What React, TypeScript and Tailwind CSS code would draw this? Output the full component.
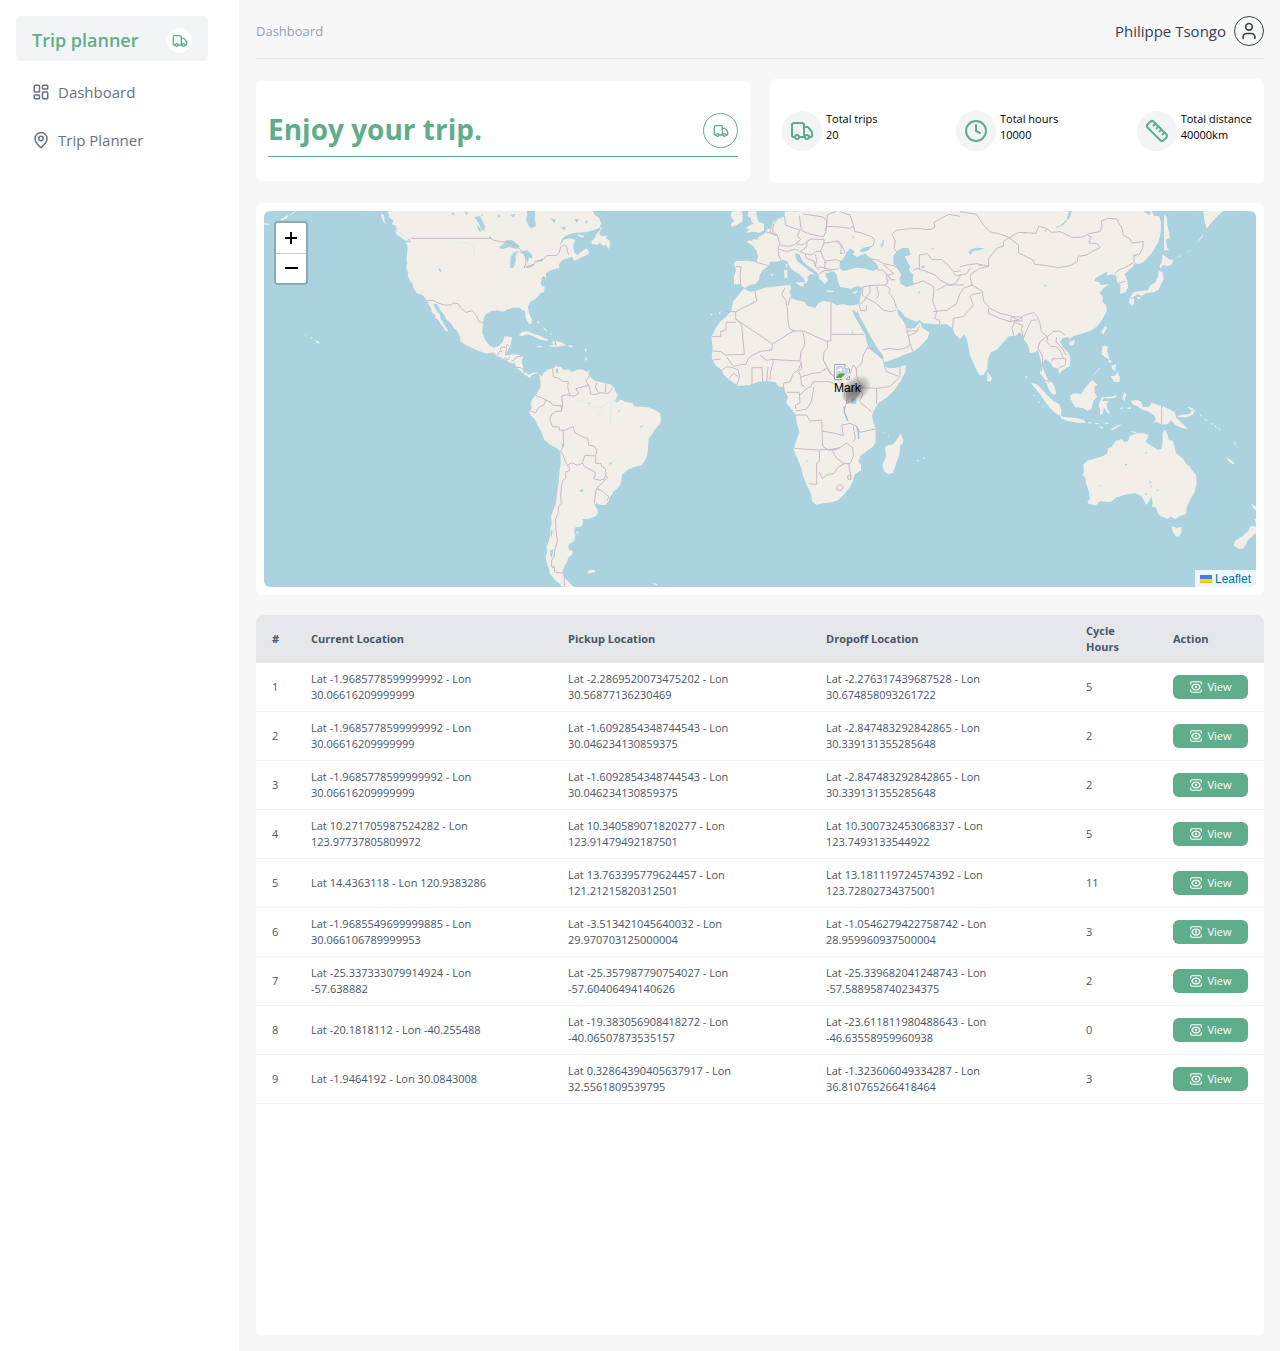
import React from "react";
import { Truck, LayoutDashboard, MapPin, User, Clock, Ruler, View } from "lucide-react";

type Trip = { from: string; pickup: string; dropoff: string; hours: number };

const trips: Trip[] = [
  { from: "Lat -1.9685778599999992 - Lon 30.06616209999999", pickup: "Lat -2.2869520073475202 - Lon 30.56877136230469", dropoff: "Lat -2.276317439687528 - Lon 30.674858093261722", hours: 5 },
  { from: "Lat -1.9685778599999992 - Lon 30.06616209999999", pickup: "Lat -1.6092854348744543 - Lon 30.046234130859375", dropoff: "Lat -2.847483292842865 - Lon 30.339131355285648", hours: 2 },
  { from: "Lat -1.9685778599999992 - Lon 30.06616209999999", pickup: "Lat -1.6092854348744543 - Lon 30.046234130859375", dropoff: "Lat -2.847483292842865 - Lon 30.339131355285648", hours: 2 },
  { from: "Lat 10.271705987524282 - Lon 123.97737805809972", pickup: "Lat 10.340589071820277 - Lon 123.91479492187501", dropoff: "Lat 10.300732453068337 - Lon 123.7493133544922", hours: 5 },
  { from: "Lat 14.4363118 - Lon 120.9383286", pickup: "Lat 13.763395779624457 - Lon 121.21215820312501", dropoff: "Lat 13.181119724574392 - Lon 123.72802734375001", hours: 11 },
  { from: "Lat -1.9685549699999885 - Lon 30.066106789999953", pickup: "Lat -3.513421045640032 - Lon 29.970703125000004", dropoff: "Lat -1.0546279422758742 - Lon 28.959960937500004", hours: 3 },
  { from: "Lat -25.337333079914924 - Lon -57.638882", pickup: "Lat -25.357987790754027 - Lon -57.60406494140626", dropoff: "Lat -25.339682041248743 - Lon -57.588958740234375", hours: 2 },
  { from: "Lat -20.1818112 - Lon -40.255488", pickup: "Lat -19.383056908418272 - Lon -40.06507873535157", dropoff: "Lat -23.611811980488643 - Lon -46.63558959960938", hours: 0 },
  { from: "Lat -1.9464192 - Lon 30.0843008", pickup: "Lat 0.32864390405637917 - Lon 32.5561809539795", dropoff: "Lat -1.323606049334287 - Lon 36.810765266418464", hours: 3 },
];

type Region = { at: string; land: string[]; water?: string[]; borders: string[]; lakes?: string[]; rivers?: string[] };

const regions: Region[] = [
  {
    // North and Central America, Caribbean
    at: "translate(264 205) scale(0.33333)",
    land: [
      "370,10 374,28 376,38 388,46 384,58 396,62 398,78 412,84 420,96 436,102 441,112 430,112 425,110 430,124 430,140 427,165 430,172 426,190 432,200 431,212 438,228 446,238 448,247 458,265 475,270 488,285 495,300 502,312 503,322 515,330 513,338 524,346 530,358 540,368 541,376 553,381 549,370 540,360 537,350 530,342 528,330 518,318 512,305 508,296 520,298 528,315 540,330 548,344 562,356 570,370 580,378 588,395 589,408 605,420 630,432 655,442 668,446 680,443 690,444 700,454 715,460 728,466 738,474 752,474 757,488 770,498 780,508 798,519 803,510 820,505 828,516 830,526 845,510 832,514 820,502 805,504 795,509 782,500 778,488 773,470 777,453 755,448 733,450 727,445 735,430 741,415 744,396 722,394 716,410 705,422 690,428 677,422 664,405 655,385 656,365 658,345 665,328 683,318 700,316 715,320 722,318 727,315 745,308 765,308 775,316 783,318 785,340 795,356 802,358 804,345 795,325 792,305 800,290 815,282 828,266 840,260 842,247 834,236 832,220 840,212 846,222 846,205 862,195 872,192 885,190 885,178 895,165 910,160 925,155 930,168 950,158 968,150 976,142 968,130 950,142 940,150 930,140 928,120 934,104 915,100 900,104 886,122 896,100 905,92 928,84 965,82 988,76 1006,68 1012,56 1005,38 992,30 984,10",
      "1008,64 1010,74 996,88 994,98 983,108 983,117 1000,119 1008,114 1018,122 1026,120 1034,132 1038,122 1036,106 1026,100 1028,92 1014,94 1005,86 1014,70",
      "765,390 775,380 790,379 812,388 830,393 842,400 856,405 846,408 828,404 808,394 790,388 772,394",
      "862,410 880,409 896,414 905,421 890,424 872,427 852,422 870,420",
      "820,422 832,423 835,427 822,427", "914,421 927,422 924,427 914,425",
      "154,406 163,408 167,412 160,416", "139,396 148,399 144,402", "122,387 129,389 125,391",
      "940,88 960,92 956,98 944,94", "350,28 360,30 362,50 370,62 358,50", "390,76 410,84 430,100 438,110 420,104 400,90",
      "0,54 18,57 14,60 0,58", "48,44 66,34 72,30 70,38 56,46", "74,32 88,22 98,18 84,28",
      "818,346 826,352 824,358", "836,366 848,374 846,380", "858,382 866,390 860,388", "962,430 968,434 964,442", "964,452 969,462 965,470",
    ],
    water: [
      "703,128 718,118 726,106 745,106 768,124 758,132 735,126 716,132", "738,188 740,155 750,142 766,138 754,150 756,165 750,186 744,190",
      "766,140 790,136 806,152 804,160 794,158 792,172 784,158 778,148", "786,186 810,176 808,184 788,190", "814,170 838,160 836,168 816,172",
      "785,10 790,30 786,46 792,60 802,70 816,62 812,40 814,10", "630,36 648,34 656,48 664,66 660,78 652,72 646,58 640,48", "638,58 648,70 654,80 644,78",
      "522,190 530,192 533,202 526,198", "832,226 840,240 836,246 830,236", "648,30 656,28 656,34", "675,94 683,96 682,102 676,101",
      "700,30 712,32 704,38", "740,30 756,26 748,38", "860,40 876,44 870,54", "890,68 906,64 902,76", "930,44 944,40 940,54", "962,50 972,46 968,56", "600,20 612,24 608,30", "560,26 570,22 572,32", "874,480 882,488 880,502 872,494",
    ],
    borders: [
      "440,100 680,100 690,106 712,110 735,112 765,130 785,148 786,175 780,188 810,178 815,168 835,166 848,152 878,151 886,142 890,126 898,120 908,124 910,140 915,150",
      "490,286 508,286 522,294 540,300 562,300 568,294 582,296 592,310 605,322 625,317 636,330 645,350 658,353",
      "700,450 706,440 714,440 708,432 714,427 728,427 728,420 734,420", "728,430 724,450 734,448", "720,458 732,464 738,456", "742,470 752,464 758,456 775,453", "757,487 770,488 780,494 780,505", "826,500 824,515", "874,410 876,424",
    ],
    rivers: ["600,112 622,118 632,136 630,158", "578,112 590,116"],
  },
  {
    // South America
    at: "translate(500 350) scale(0.33333)",
    land: [
      "118,80 122,95 120,115 108,135 97,148 93,160 95,175 88,186 94,198 104,208 112,225 125,248 132,268 150,284 170,295 181,305 182,340 178,370 176,400 172,420 170,440 167,465 158,485 153,500 155,520 150,540 150,558 146,575 140,590 142,605 137,620 140,640 146,655 150,672 165,690 180,702 190,715 228,715 214,704 200,690 193,680 188,665 192,650 202,635 204,624 215,615 219,603 208,600 204,590 208,582 222,574 226,558 222,545 226,532 244,530 249,520 248,508 268,506 284,500 294,490 292,478 283,464 290,460 302,465 318,464 326,452 330,440 345,422 358,408 365,392 366,374 385,358 405,350 425,346 436,330 442,312 444,295 446,265 460,246 470,232 480,222 483,208 480,190 465,180 445,172 420,170 402,168 398,160 375,155 362,148 350,158 345,152 354,136 345,122 342,112 330,102 300,96 285,92 275,85 265,74 268,68 245,58 228,60 215,66 205,58 190,60 182,50 170,50 168,44 158,54 142,60 130,70 124,82",
      "262,664 272,660 286,660 284,666 272,670 264,670", "458,698 470,702 474,708 462,702", "228,544 236,546 232,552", "262,60 269,62 265,67",
    ],
    water: ["168,56 174,56 174,70 168,70", "239,420 249,417 249,426 241,425", "184,278 190,282 192,292 186,288", "418,230 430,226 428,231 420,233", "326,342 338,334 332,344", "354,180 360,182 358,187", "264,158 272,158 270,163", "337,428 349,418 344,430", "152,540 158,540 156,560 151,556", "152,600 160,598 156,625 150,615", "160,646 166,650 160,656"],
    borders: [
      "165,45 158,58 160,80 175,85 190,94 205,95 203,110 208,132 215,138 224,138 236,130 228,116 250,110 265,107 258,92 268,78",
      "265,104 270,118 272,132 285,134 300,128 325,130 338,112", "295,128 286,112 290,98", "316,128 318,98",
      "212,138 200,134 185,138 188,165 184,184 168,184 155,192 149,210 158,230 178,232 178,240 195,241 205,236 220,230 224,248 244,258 264,266 266,286 282,288 290,300 287,318 255,316 247,338",
      "108,137 122,142 138,150 132,164 116,172 106,188 92,184", "138,150 150,156 160,166 184,167 184,180", "190,241 190,268 192,285 182,305 190,318 196,335 202,347 215,338 232,346 247,340 255,350 285,366 286,376 280,386 300,391 314,386 318,370 316,356 304,348 302,340 287,340 287,318",
      "202,347 208,352 208,362 198,365 197,385 188,392 184,410 182,440 184,458 176,470 174,490 166,510 168,540 172,575 166,592 162,620 155,632 155,650 163,654 164,666 192,670 193,711",
      "318,376 322,384 290,415 308,424 326,440 322,452", "290,415 286,432 283,460",
    ],
    rivers: ["354,150 320,160 300,172 270,168 252,156 230,150", "334,162 332,200 330,230", "310,165 304,185 290,205"],
  },
  {
    // Europe, Africa and Asia
    at: "translate(690 205) scale(0.33333)",
    land: [
      "132,174 140,167 158,168 175,167 200,172 204,155 200,138 190,124 172,112 174,106 186,108 190,102 202,104 208,94 224,86 230,74 244,68 250,50 262,42 274,38 284,34 284,10 1370,10 1384,18 1392,32 1408,34 1413,52 1412,85 1405,112 1385,145 1362,170 1345,178 1334,174 1328,186 1316,196 1304,208 1312,228 1314,248 1306,262 1290,267 1292,240 1282,232 1278,212 1264,208 1250,213 1252,200 1236,208 1216,220 1214,228 1228,232 1232,240 1256,238 1240,250 1228,264 1238,274 1238,292 1248,300 1250,318 1238,342 1220,365 1200,378 1180,385 1150,394 1138,402 1135,396 1118,400 1110,410 1120,428 1134,442 1141,460 1140,482 1120,494 1108,506 1104,492 1088,486 1082,474 1066,462 1060,470 1058,488 1066,506 1074,525 1086,532 1094,546 1099,566 1090,570 1078,556 1070,536 1058,514 1050,504 1056,480 1050,458 1044,436 1036,442 1020,444 1014,420 1002,404 998,392 988,382 978,392 956,394 944,408 920,434 902,442 893,465 892,492 882,508 870,512 858,492 840,450 830,400 822,388 810,402 795,388 788,370 770,358 735,358 700,355 688,344 682,350 664,345 645,335 632,318 620,312 625,330 636,342 644,356 650,368 664,372 678,366 690,350 696,368 718,382 714,398 700,414 686,428 668,440 640,450 620,460 582,472 578,450 560,425 544,398 530,372 518,350 508,332 503,318 508,300 512,272 517,246 500,244 482,252 466,248 450,246 444,230 438,206 430,198 418,206 406,202 408,214 414,226 404,238 396,228 388,222 384,206 366,190 350,180 336,166 328,148 318,144 315,152 324,170 342,184 356,196 374,208 360,208 352,216 354,226 346,238 342,222 328,208 312,198 300,188 292,168 276,164 262,170 240,170 234,184 218,196 208,212 208,222 198,236 180,240 164,250 152,238 132,238 132,214 138,196",
      "155,258 162,252 182,260 200,257 225,248 262,244 300,240 304,250 298,262 304,270 300,278 320,286 342,290 352,302 376,308 384,296 398,288 424,292 440,300 460,298 480,302 505,298 510,306 500,324 494,318 486,314 492,330 500,345 508,358 516,374 526,388 528,402 534,425 548,440 562,450 578,465 582,484 596,490 620,488 648,480 646,500 634,524 614,554 590,578 564,595 550,620 546,632 550,652 556,668 557,710 548,726 530,738 510,754 506,770 513,780 513,796 494,808 488,830 480,845 464,866 446,884 428,892 402,894 378,899 366,888 364,868 350,840 338,810 334,790 322,760 311,736 318,710 328,680 320,655 318,630 304,612 288,594 294,575 286,565 282,544 268,546 256,532 230,528 205,530 180,540 145,543 120,526 100,508 94,494 76,480 65,458 68,430 64,396 76,372 90,350 108,336 124,318 130,288 146,270",
      "178,10 172,34 182,38 184,50 192,56 180,60 166,70 180,72 166,84 188,80 208,84 222,76 222,56 206,50 200,34 198,10",
      "130,10 154,10 158,30 156,50 140,60 126,66 122,58 132,48 122,32", "316,232 342,231 340,246 326,240", "282,196 292,194 292,218 284,220", "286,178 292,176 290,192", "408,256 432,258 430,262 410,260",
      "240,206 250,208 246,214", "1540,18 1544,50 1550,72 1558,60 1580,35 1596,22 1600,10 1540,10",
      "1422,28 1430,36 1432,60 1440,98 1428,104 1432,130 1438,136 1422,136 1422,80", "1418,148 1436,162 1450,166 1446,176 1434,184 1420,180 1412,190 1408,184 1416,170", "1406,198 1418,200 1421,222 1412,240 1406,254 1392,262 1370,264 1356,272 1342,268 1330,276 1318,282 1330,262 1350,258 1374,256 1380,242 1396,232 1404,216", "1318,282 1332,280 1332,296 1324,302 1318,292", "1340,276 1352,276 1346,284",
      "1247,362 1250,370 1240,390 1234,380", "1138,412 1156,404 1150,420 1140,422", "1238,422 1253,424 1252,440 1258,462 1248,458 1234,448", "1262,514 1276,512 1282,500 1290,518 1288,532 1272,530", "1254,462 1266,470 1258,474", "1264,482 1278,478 1276,500 1266,490", "1208,512 1228,490 1232,488 1212,510",
      "892,500 906,518 902,530 892,528", "60,328 70,326 64,332", "86,326 92,318 90,328",
      "1452,162 1474,150 1472,154", "1486,144 1504,134 1500,138", "1518,116 1540,88 1536,98",
    ],
    water: [
      "448,190 450,172 462,158 470,140 482,130 494,140 488,148 502,156 512,150 526,146 544,162 560,176 566,190 550,198 520,190 498,188 476,194 460,198",
      "508,138 518,128 544,124 536,136 518,142", "610,152 622,138 638,128 656,130 662,150 644,154 656,178 662,184 656,196 670,208 668,226 672,240 650,246 632,236 628,222 634,210 622,190 610,176",
      "426,200 438,204 442,220 436,222 448,240 430,246 412,232 418,226 408,212 414,204",
      "340,10 330,18 310,20 300,14 290,22 286,10", "840,134 858,128 884,130 870,135 848,138 842,150 836,144", "1096,66 1110,62 1130,44 1136,18 1146,18 1140,36 1122,58 1102,68", "692,184 702,180 704,190 696,188", "724,130 732,130 730,136", "484,94 494,96 492,100", "578,105 582,106 580,125 576,120", "862,181 878,178 874,184", "998,82 1008,80 1004,86", "1060,240 1070,240 1068,246", "684,258 692,262 686,266", "590,222 598,226 592,230", "572,112 578,130 572,124", "484,386 490,372 488,386", "600,224 606,222 606,228",
      "485,580 500,582 498,598 484,596", "346,768 354,766 352,770", "1064,74 1072,72 1066,82", "1330,148 1338,150 1334,156", "1360,18 1384,20 1376,30",
    ],
    borders: [
      "195,258 200,288 178,300 160,308 137,320 137,342 247,417 310,378", "137,320 108,320", "285,248 275,268 288,288 292,310 294,348 298,370 318,380", "295,300 300,278", "423,293 423,408 412,408 412,430", "340,378 412,410", "425,388 523,388", "65,395 92,394 92,380 108,375 108,352 137,352",
      "155,360 163,448 107,450 92,440 68,438", "92,462 70,465", "155,360 137,342", "310,378 338,378", "247,417 246,434 210,440 185,452 175,460 168,478 145,480 130,484 110,456", "210,450 230,466 245,463 290,466 330,468 333,440 345,420 342,398 338,378", "240,525 242,500 250,470 244,460", "96,496 110,485 128,488 145,495 148,515 142,540", "186,540 186,488 216,488 218,530", "230,528 234,486", "118,520 130,505 145,515",
      "335,470 325,495 310,505 300,530 282,534 280,545", "412,430 402,440 400,465 412,488 392,502 364,506 335,515 330,520", "332,470 336,490 326,500 332,512 334,540 345,545", "410,488 424,510 440,510 462,506 478,512 490,480 498,490 500,512", "534,425 520,450 516,472 500,490 500,515 515,548 560,550 600,545 630,515 630,486", "534,430 555,432 578,460", "582,484 590,500 625,514",
      "560,550 560,595", "412,488 430,515 460,540", "290,562 328,562 330,594 316,600 318,612", "330,570 350,550 362,545 370,530 420,530 448,545 470,545", "282,562 292,575", "318,618 350,612 364,590 372,545", "316,630 350,630 360,648 395,645 396,678 398,724 416,736 450,728", "314,730 380,735 440,732", "396,678 440,686 460,692 455,660 480,655 500,664 510,682 555,672",
      "388,738 388,770 380,775 380,838 356,836", "388,800 396,820 415,808 430,806 445,786 462,776 480,776 490,755 488,728 470,714 450,728 424,738", "462,776 440,760 428,740", "476,776 480,800 484,815", "466,545 462,580 470,590 462,620", "510,592 545,620", "512,550 518,570 508,590", "490,664 496,700 490,710", "440,846 450,838 460,846 454,856 442,856 440,846", "473,812 482,812 483,824 474,822 473,812",
      "138,184 154,186 150,210 152,238", "198,172 236,182", "244,68 240,80 262,92 270,118 264,128 266,150 272,164", "226,80 240,84 258,92", "262,42 250,60 248,78 262,92", "284,34 286,60 330,76 322,92 332,104 314,118 300,124 272,122", "266,132 290,140 318,132 328,140", "318,116 340,120 352,108 364,102 402,104", "328,32 334,76 355,86 400,96 408,80 410,50 400,36 360,30 340,28", "352,108 350,125 330,140 346,146 364,150 376,140 392,138 402,114 402,104", "346,146 348,160 372,168 376,184 388,195", "376,148 380,164 376,186", "392,138 400,160 406,168 440,164 454,170", "402,114 420,112 440,108 454,124 452,146 464,144", "406,168 404,190 430,195 446,190", "440,108 450,112 466,142", "384,186 404,188", "388,206 404,196 426,198",
      "404,78 410,64 450,66 480,70 490,62 495,80 515,84 545,95 553,104 550,120 540,128", "410,60 412,30 440,18", "450,20 480,30 490,60", "540,162 560,164 580,176 612,182 620,190", "560,194 580,196 590,210 592,235 584,240 540,242 518,246", "582,180 600,196 612,206 596,210", "592,206 600,222 615,225", "540,242 540,262 520,290 510,298", "520,245 516,270 524,276 560,296 580,316 604,320 618,315", "560,245 566,268 560,280", "584,240 602,252 596,262 612,284 620,310", "508,300 512,316 528,318 530,300", "578,434 600,430 624,434 650,428 660,416 655,392 680,382 685,370 688,362", "655,392 650,378 680,378", "660,416 668,438", "650,366 652,380",
      "620,140 612,130 616,108 606,90 618,76 650,72 680,70 720,74 735,66 732,52 776,28 810,34", "810,20 860,28 880,60 900,80 940,90 958,98 985,82 1025,84 1038,85 1046,64 1070,70 1084,82 1110,80 1150,98 1178,96 1200,85 1230,80 1236,62 1234,48 1252,40 1280,42 1296,70 1300,90 1320,102 1326,114 1360,110 1358,130 1348,148 1332,152 1332,172 1304,188 1288,194 1272,208",
      "958,98 985,120 986,144 1028,164 1034,178 1070,182 1105,188 1140,182 1162,170 1164,154 1190,150 1206,140 1230,128 1222,116 1196,114 1204,96 1194,90", "958,98 940,110 942,122 920,130 910,142 896,160 896,184 870,190 845,205 840,215 846,240 876,258 882,290 900,310 930,325 960,332 985,345 1000,332 1030,322 1042,335 1050,355 1054,380 1072,395 1090,380 1110,378 1125,390",
      "670,196 680,190 705,198 735,210 750,225 780,240 796,236 812,210", "688,194 688,150 712,146 726,164 755,164 778,184 790,200 812,198", "810,185 830,180 860,176 896,184", "790,204 800,212 830,206 840,190", "668,238 700,228 730,244 732,256 728,290 740,320 734,340 750,348 748,358", "730,320 770,316 800,296 808,270 820,250 848,240", "740,256 770,240 796,240 822,240", "788,370 790,340 820,335 838,315 850,300 840,275 848,268 872,264", "896,310 895,325 930,340 960,350 984,346", "960,350 965,335 995,336 996,348 970,348", "972,356 966,370 972,394", "970,352 998,360 994,372 1000,400 1010,376 1024,346 1040,345", "1070,395 1050,410 1044,430 1056,450 1058,470 1054,500", "1074,392 1070,410 1082,424 1100,425 1112,440 1120,460 1128,462 1126,480 1105,490", "1100,396 1098,410 1118,432 1128,450", "1086,470 1086,462 1120,460", "1286,234 1305,230", "1062,524 1080,532",
      "1140,574 1160,574 1172,568 1188,574 1196,564 1194,550 1210,545", "1180,545 1200,540 1220,550",
    ],
    lakes: ["462,604 464,625 474,648", "500,664 505,680 506,702", "514,540 518,552"],
  },
  {
    // Cyprus
    at: "translate(690 205) scale(0.33333)",
    land: ["486,264 494,259 504,257 496,266"],
    borders: [],
  },
  {
    // Madagascar, Indian Ocean islands
    at: "translate(760 360) scale(0.33333)",
    land: ["422,220 430,240 428,250 420,258 418,285 408,312 400,338 385,343 372,334 368,312 378,292 375,262 384,256 400,252 412,236", "470,300 477,301 474,305", "488,292 495,293 491,297", "368,216 373,218 369,220", "384,224 388,226 384,228"],
    borders: [],
  },
  {
    // Indonesia and Oceania
    at: "translate(1000 370) scale(0.33333)",
    land: [
      "93,38 110,42 122,54 140,74 160,92 176,102 184,116 183,138 166,130 148,112 134,94 120,72 104,54", "181,138 200,142 228,144 252,150 258,158 232,158 202,152 184,146", "264,156 276,158 268,161", "282,158 300,160 290,163", "306,158 328,158 322,162", "296,168 310,172 306,176", "332,178 348,168 364,162 356,170 338,180",
      "210,76 222,70 244,72 258,50 276,30 284,36 292,44 284,50 284,68 292,80 280,92 274,118 262,122 248,114 226,112 218,100 212,86", "298,98 306,82 328,80 346,78 350,72 348,82 330,86 312,84 306,94 328,92 320,102 322,116 330,130 322,130 312,112 308,132 300,134 300,114 296,110", "368,78 374,66 378,74 374,94 370,90", "358,114 370,112 366,118", "376,114 394,112 392,118",
      "392,92 412,90 424,96 428,110 446,112 456,98 472,104 486,108 508,118 524,126 530,144 546,160 564,176 544,174 526,164 512,150 504,162 486,164 472,156 458,158 468,150 462,136 444,124 428,120 412,108 400,104", "532,138 548,134 568,132 574,124 584,122 578,134 560,142 536,142", "560,110 576,114 586,124 574,120", "598,130 606,136 602,138", "612,144 626,154 618,152", "630,158 640,162 636,164", "642,162 654,176 646,172", "654,168 662,180 658,180", "702,212 707,220 705,228", "709,222 714,236 711,234", "678,262 690,268 706,282 698,282 684,272",
      "250,284 262,272 290,264 310,258 322,250 324,234 334,232 348,212 366,208 372,216 384,214 390,198 412,190 430,190 446,195 442,208 436,214 455,228 475,240 484,236 488,210 488,190 494,179 502,192 506,210 518,212 524,232 528,250 550,266 556,280 570,290 578,304 588,314 590,340 584,366 570,390 560,412 558,432 540,438 526,447 512,440 502,446 480,438 472,428 468,412 456,410 458,398 454,378 448,394 438,405 432,392 424,378 405,370 380,373 350,382 332,396 300,394 288,406 266,402 262,394 270,388 266,362 258,340 256,322 246,316 252,306",
      "390,184 412,186 404,189", "514,468 530,474 545,470 545,486 536,500 526,498 518,484", "508,456 512,462 508,462", "770,470 752,468 744,484 728,498 704,514 702,528 716,536 728,536 738,524 742,512 758,498 770,486", "752,400 768,410 770,422 762,416", "764,446 770,450 766,458", "76,16 82,22 78,26", "98,72 104,76 100,78", "114,92 120,98 116,100", "126,106 132,112 128,114",
    ],
    water: ["374,282 383,282 380,287 376,286", "434,247 441,247 438,251", "446,334 456,336 450,340", "450,346 458,348 452,352", "470,358 476,360 472,363", "432,370 442,372 438,376", "296,346 302,348 298,351"],
    borders: ["485,108 485,164"],
  },
];

function WorldMap() {
  return (
    <svg className="block h-full w-full" viewBox="264 211 992 376" preserveAspectRatio="xMidYMid slice" role="img" aria-label="World map">
      <defs>
        <radialGradient id="shade">
          <stop offset="0" stopColor="#333" stopOpacity="0.5" />
          <stop offset="0.5" stopColor="#333" stopOpacity="0.34" />
          <stop offset="1" stopColor="#333" stopOpacity="0" />
        </radialGradient>
      </defs>
      <rect x="0" y="0" width="1600" height="800" fill="#aad3df" />
      {regions.map((r, n) => (
        <g key={n} transform={r.at}>
          {r.land.map((p, i) => (
            <polygon key={i} points={p} fill="#f2efe9" />
          ))}
          {r.water?.map((p, i) => (
            <polygon key={i} points={p} fill="#aad3df" />
          ))}
          {r.rivers?.map((p, i) => (
            <polyline key={i} points={p} fill="none" stroke="#dde6e5" strokeWidth="2" />
          ))}
          {r.lakes?.map((p, i) => (
            <polyline key={i} points={p} fill="none" stroke="#93bcd6" strokeWidth="4" />
          ))}
          {r.borders.map((p, i) => (
            <polyline key={i} points={p} fill="none" stroke="#c9b3c5" strokeWidth="2.8" />
          ))}
        </g>
      ))}
      <path d="M847 404 C845 399 845 392 848 387 L861 386 C862 392 857 399 851 403 Z" fill="#333" opacity="0.3" />
      <ellipse cx="856" cy="389" rx="17" ry="12" transform="rotate(-38 856 389)" fill="url(#shade)" />
    </svg>
  );
}

function BrokenImage() {
  return (
    <svg width="16" height="16" viewBox="0 0 16 16" className="block">
      <path d="M0.5 15.5V0.5H11L15.5 5V9L9 15.500Z" fill="#fff" stroke="#a3a3a3" />
      <path d="M2 2H10V6H14V9L8 14H2Z" fill="#c3d5f5" />
      <path d="M3 7C3 5 5 5 5.500 4.500C7 3 8.500 5 8 7Z" fill="#fff" />
      <path d="M2 14C3 10 8 8 11 10L7 14Z" fill="#55a832" />
      <path d="M8 16L16 8.500V11L11 16Z" fill="#f2efe9" />
      <path d="M12 15.500H15.500V12Z" fill="#fff" stroke="#a3a3a3" />
      <path d="M11 0.500V5H15.500" fill="#fff" stroke="#a3a3a3" />
    </svg>
  );
}

function Stat({ icon, label, value }: { icon: React.ReactNode; label: string; value: string }) {
  return (
    <div className="flex gap-1">
      <div className="flex size-10 items-center justify-center rounded-full bg-gray-100 text-[#5fad8a]">{icon}</div>
      <div className="text-[11px] leading-4 text-black">
        <p>{label}</p>
        <p>{value}</p>
      </div>
    </div>
  );
}

export default function App() {
  return (
    <div className="flex min-h-screen bg-[#f7f7f7] font-['Open_Sans','Noto_Sans',sans-serif]">
      <aside className="w-[239px] shrink-0 bg-white p-4">
        <div className="flex w-48 items-center justify-between rounded-md bg-gray-100 px-4 pt-3 pb-2">
          <span className="text-[18px] leading-[25px] font-semibold text-[#5fad8a]">Trip planner</span>
          <span className="flex size-[25px] items-center justify-center rounded-full bg-white text-[#5fad8a]">
            <Truck size={16} />
          </span>
        </div>
        <nav className="mt-[7px] flex flex-col text-[15px] text-gray-500">
          <a href="#dashboard" className="flex h-12 items-center gap-2 px-4">
            <LayoutDashboard size={18} />
            Dashboard
          </a>
          <a href="#planner" className="flex h-12 items-center gap-2 px-4">
            <MapPin size={18} />
            Trip Planner
          </a>
        </nav>
      </aside>

      <main className="flex min-w-0 flex-1 flex-col gap-5 py-4 pr-4 pl-[17px]">
        <header className="flex h-[43px] items-start justify-between border-b border-gray-200">
          <span className="text-[13px] leading-[30px] text-gray-400">Dashboard</span>
          <div className="flex items-center gap-2 text-gray-700">
            <span className="text-[15px]">Philippe Tsongo</span>
            <span className="flex size-[30px] items-center justify-center rounded-full border border-gray-700">
              <User size={20} />
            </span>
          </div>
        </header>

        <section className="grid grid-cols-2 items-center gap-5">
          <div className="rounded-md bg-white px-3 pt-8 pb-6">
            <div className="flex items-start justify-between border-b border-[#5fad8a] pb-2">
              <h1 className="text-[28px] leading-8 font-bold text-[#5fad8a]">Enjoy your trip.</h1>
              <span className="flex size-[35px] items-center justify-center rounded-full border border-[#5fad8a] text-[#5fad8a]">
                <Truck size={16} />
              </span>
            </div>
          </div>
          <div className="flex h-[104px] items-center justify-between rounded-md bg-white px-3">
            <Stat icon={<Truck size={24} />} label="Total trips" value="20" />
            <Stat icon={<Clock size={24} />} label="Total hours" value="10000" />
            <Stat icon={<Ruler size={24} />} label="Total distance" value="40000km" />
          </div>
        </section>

        <section className="rounded-md bg-white p-2">
          <div className="relative h-[376px] overflow-hidden rounded-md">
            <WorldMap />
            <div className="absolute top-[10px] left-[10px] flex flex-col rounded-[4px] border-2 border-[#8aaab4] bg-white">
              <button aria-label="Zoom in" className="flex size-[30px] items-center justify-center rounded-t-[2px] bg-white">
                <svg width="12" height="12" viewBox="0 0 12 12"><path d="M6 0V12M0 6H12" stroke="#000" strokeWidth="2" /></svg>
              </button>
              <button aria-label="Zoom out" className="flex size-[30px] items-center justify-center rounded-b-[2px] border-t border-[#ccc] bg-white">
                <svg width="14" height="12" viewBox="0 0 14 12"><path d="M1 5H14" stroke="#000" strokeWidth="2" /></svg>
              </button>
            </div>
            <div className="absolute top-[153px] left-[570px] font-['Liberation_Sans',sans-serif] text-xs text-black">
              <BrokenImage />
              <span className="block">Mark</span>
            </div>
            <div className="absolute right-0 bottom-0 flex h-[17px] items-center gap-[3px] bg-white/80 px-[5px] font-['Liberation_Sans',sans-serif] text-xs leading-[14px] text-[#0078a8]">
              <svg width="12" height="8" viewBox="0 0 12 8">
                <path fill="#4c7be1" d="M0 0h12v4H0z" />
                <path fill="#ffd500" d="M0 4h12v3H0z" />
                <path fill="#e0bc00" d="M0 7h12v1H0z" />
              </svg>
              <a href="#leaflet">Leaflet</a>
            </div>
          </div>
        </section>

        <section className="grow overflow-hidden rounded-md rounded-t-lg bg-white">
          <table className="w-full table-fixed border-separate border-spacing-0 text-left text-[11px] leading-4 text-gray-600">
            <colgroup>
              <col className="w-[39px]" />
              <col className="w-[257px]" />
              <col className="w-[258px]" />
              <col />
              <col className="w-[87px]" />
              <col className="w-[107px]" />
            </colgroup>
            <thead className="bg-gray-200">
              <tr className="h-12">
                <th className="px-4 font-bold">#</th>
                <th className="px-4 font-bold">Current Location</th>
                <th className="px-4 font-bold">Pickup Location</th>
                <th className="px-4 font-bold">Dropoff Location</th>
                <th className="px-4 font-bold">Cycle Hours</th>
                <th className="px-4 font-bold">Action</th>
              </tr>
            </thead>
            <tbody>
              {trips.map((t, i) => (
                <tr key={i} className="h-[49px]">
                  <td className="border-b border-gray-100 px-4">{i + 1}</td>
                  <td className="border-b border-gray-100 pr-10 pl-4">{t.from}</td>
                  <td className="border-b border-gray-100 pr-10 pl-4">{t.pickup}</td>
                  <td className="border-b border-gray-100 pr-10 pl-4">{t.dropoff}</td>
                  <td className="border-b border-gray-100 px-4">{t.hours}</td>
                  <td className="border-b border-gray-100 px-4">
                    <button className="flex h-6 w-full items-center justify-center gap-1 rounded-md bg-[#5fad8a] text-white">
                      <View size={14} />
                      View
                    </button>
                  </td>
                </tr>
              ))}
            </tbody>
          </table>
        </section>
      </main>
    </div>
  );
}
